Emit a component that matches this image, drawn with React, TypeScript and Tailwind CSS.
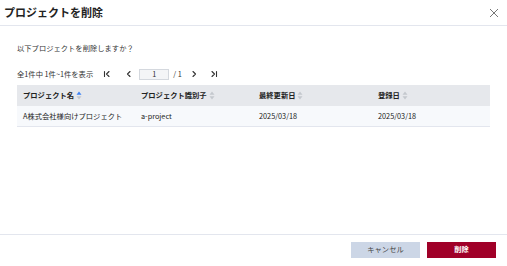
import React from "react";

const SortIcon = ({ active }: { active?: boolean }) => (
  <svg width="6" height="9" viewBox="0 0 6 9" className="ml-[2px]">
    <path d="M3 0.5 L5.5 3.8 H0.5 Z" fill={active ? "#3b82f6" : "#c4c8ce"} />
    <path d="M3 8.5 L5.5 5.2 H0.5 Z" fill="#c4c8ce" />
  </svg>
);

const Icon = ({ d }: { d: string }) => (
  <svg width="8" height="8" viewBox="0 0 8 8" fill="none" stroke="#333" strokeWidth="1.1" strokeLinecap="round" strokeLinejoin="round">
    <path d={d} />
  </svg>
);

export default function App() {
  const font = { fontFamily: '"Noto Sans CJK JP", "Noto Sans", sans-serif' };
  return (
    <div className="w-[507px] h-[266px] bg-white flex flex-col text-[#333]" style={font}>
      <div className="h-[26px] flex items-center justify-between pl-[4px] pr-[8px] border-b border-[#e3e6ee]">
        <div className="text-[11px] font-bold text-[#222] leading-none">プロジェクトを削除</div>
        <svg width="10" height="10" viewBox="0 0 10 10">
          <path d="M1 1 L9 9 M9 1 L1 9" stroke="#777" strokeWidth="1" />
        </svg>
      </div>
      <div className="flex-1 px-[17px] pt-[16px]">
        <div className="text-[7.3px] leading-[12px] text-[#333]">以下プロジェクトを削除しますか？</div>
        <div className="flex items-center mt-[14px] h-[12px] text-[7.3px] text-[#333]">
          <span>全1件中 1件~1件を表示</span>
          <span className="ml-[10px] flex"><Icon d="M1.5 1.5 V6.5 M6 1.5 L3.5 4 L6 6.5" /></span>
          <span className="ml-[14px] flex"><Icon d="M5 1.5 L2.5 4 L5 6.5" /></span>
          <div className="ml-[6px] w-[30px] h-[11px] border border-[#d4d8de] bg-[#f4f5f7] flex items-center justify-center text-[7.3px]">1</div>
          <span className="ml-[4px]">/ 1</span>
          <span className="ml-[8px] flex"><Icon d="M3 1.5 L5.5 4 L3 6.5" /></span>
          <span className="ml-[12px] flex"><Icon d="M2 1.5 L4.5 4 L2 6.5 M6.5 1.5 V6.5" /></span>
        </div>
        <div className="mt-[5px] w-[473px]">
          <div className="grid grid-cols-[118px_118px_119px_118px] h-[21px] bg-[#e6e8ec] items-center text-[7.3px] font-bold text-[#222]">
            <div className="pl-[6px] flex items-center">プロジェクト名<SortIcon active /></div>
            <div className="pl-[6px] flex items-center">プロジェクト識別子<SortIcon /></div>
            <div className="pl-[6px] flex items-center">最終更新日<SortIcon /></div>
            <div className="pl-[6px] flex items-center">登録日<SortIcon /></div>
          </div>
          <div className="grid grid-cols-[118px_118px_119px_118px] h-[21px] bg-[#f7f9fc] items-center text-[7.3px] text-[#222] border-b border-[#e3e6ee]">
            <div className="pl-[6px]">A株式会社様向けプロジェクト</div>
            <div className="pl-[6px]">a-project</div>
            <div className="pl-[6px]">2025/03/18</div>
            <div className="pl-[6px]">2025/03/18</div>
          </div>
        </div>
      </div>
      <div className="h-[32px] border-t border-[#e3e6ee] flex items-center justify-end gap-[7px] pr-[11px] pb-[2px]">
        <button className="w-[69px] h-[16px] bg-[#ccd6e6] text-[7.3px] text-[#444] flex items-center justify-center">キャンセル</button>
        <button className="w-[69px] h-[16px] bg-[#a00028] text-[7.3px] text-white font-bold flex items-center justify-center">削除</button>
      </div>
    </div>
  );
}
